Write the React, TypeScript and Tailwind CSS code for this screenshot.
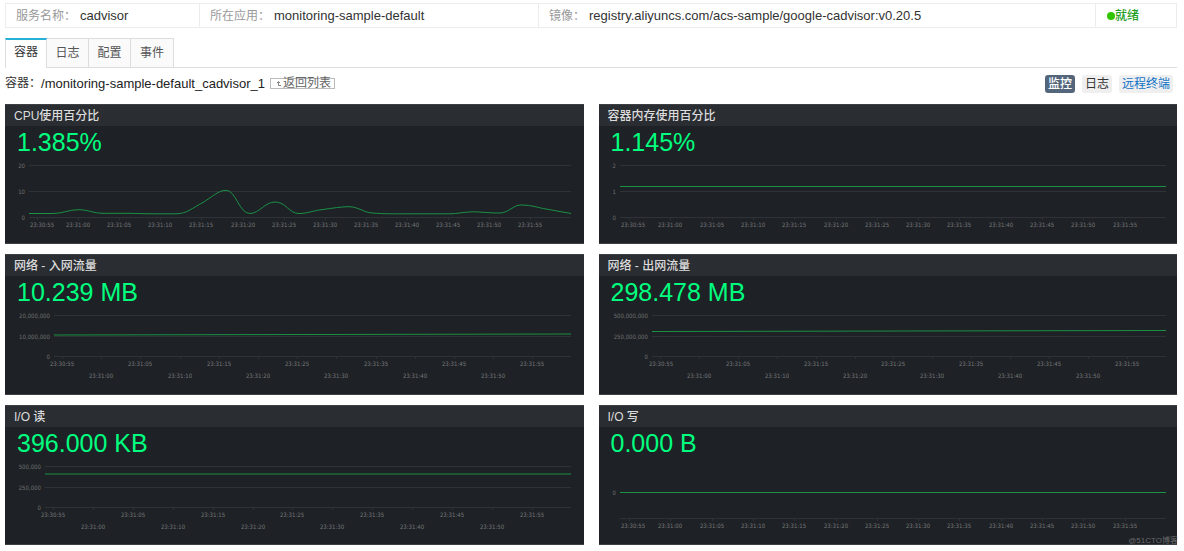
import React from "react";

type ChartProps = {
  height: number;
  left: number;
  right: number;
  grid: { y: number; label?: string }[];
  axisY: number;
  firstTick: number;
  tickGap: number;
  firstLabel: number;
  stagger?: boolean;
  line: string;
};

type PanelProps = {
  title: string;
  value: string;
  chart: ChartProps;
};

const times = [
  "23:30:55",
  "23:31:00",
  "23:31:05",
  "23:31:10",
  "23:31:15",
  "23:31:20",
  "23:31:25",
  "23:31:30",
  "23:31:35",
  "23:31:40",
  "23:31:45",
  "23:31:50",
  "23:31:55",
];

const cpuLine =
  "M24 55.5H48C58 55.5 64 51.7 73 51.7C84 51.7 88 55.3 98 55.3H122C130 55.3 137 55.8 147 55.8H171C182 55.8 188 49.5 197 45C206 40 213 32.3 221 32.3C231 32.3 234 55.5 245 55.5C254 55.5 260 44 270 44C281 44 284 55.5 294 55.5C303 55.5 308 52.5 318 51.5C327 50.3 336 48.7 344 48.7C353 48.7 359 54.5 367 55C380 56 390 55.8 400 55.8H445C452 55.8 460 53.8 468 53.8C476 53.8 485 55.2 495 55C504 54.8 508 47 516 47C527 47 534 50 541 51L566 55.5";

const panels: PanelProps[] = [
  {
    title: "CPU使用百分比",
    value: "1.385%",
    chart: {
      height: 85,
      left: 24,
      right: 566,
      grid: [
        { y: 7, label: "20" },
        { y: 33, label: "10" },
        { y: 59, label: "0" },
      ],
      axisY: 59,
      firstTick: 32,
      tickGap: 41.1,
      firstLabel: 37,
      line: cpuLine,
    },
  },
  {
    title: "容器内存使用百分比",
    value: "1.145%",
    chart: {
      height: 85,
      left: 21,
      right: 567,
      grid: [
        { y: 7, label: "2" },
        { y: 33, label: "1" },
        { y: 59, label: "0" },
      ],
      axisY: 59,
      firstTick: 30,
      tickGap: 41.3,
      firstLabel: 34,
      line: "M21 28.5H567",
    },
  },
  {
    title: "网络 - 入网流量",
    value: "10.239 MB",
    chart: {
      height: 86,
      left: 49,
      right: 566,
      grid: [
        { y: 7, label: "20,000,000" },
        { y: 28, label: "10,000,000" },
        { y: 48, label: "0" },
      ],
      axisY: 48,
      firstTick: 57,
      tickGap: 39.2,
      firstLabel: 57,
      stagger: true,
      line: "M49 27L566 26",
    },
  },
  {
    title: "网络 - 出网流量",
    value: "298.478 MB",
    chart: {
      height: 86,
      left: 53,
      right: 567,
      grid: [
        { y: 7, label: "500,000,000" },
        { y: 28, label: "250,000,000" },
        { y: 48, label: "0" },
      ],
      axisY: 48,
      firstTick: 61,
      tickGap: 38.9,
      firstLabel: 62,
      stagger: true,
      line: "M53 23.5L567 22.5",
    },
  },
  {
    title: "I/O 读",
    value: "396.000 KB",
    chart: {
      height: 85,
      left: 40,
      right: 566,
      grid: [
        { y: 7, label: "500,000" },
        { y: 28, label: "250,000" },
        { y: 48, label: "0" },
      ],
      axisY: 48,
      firstTick: 48,
      tickGap: 39.9,
      firstLabel: 48,
      stagger: true,
      line: "M40 15H566",
    },
  },
  {
    title: "I/O 写",
    value: "0.000 B",
    chart: {
      height: 85,
      left: 21,
      right: 567,
      grid: [{ y: 33, label: "0" }, { y: 59 }],
      axisY: 59,
      firstTick: 30,
      tickGap: 41.3,
      firstLabel: 34,
      line: "M21 33.5H567",
    },
  },
];

const Chart: React.FC<ChartProps> = (props) => {
  const { height, left, right, grid, axisY, firstTick, tickGap, firstLabel, stagger, line } = props;
  const labelY = axisY + 10;

  return (
    <svg
      className="block w-full"
      height={height}
      viewBox={`0 0 578 ${height}`}
      preserveAspectRatio="xMinYMin meet"
    >
      {grid.map(({ y, label }) => (
        <g key={y}>
          <path d={`M${left} ${y + 0.5}H${right}`} stroke="#2f3237" />
          <text x={left - 4} y={y + 3} textAnchor="end" className="fill-[#6f7173] text-[6px]">
            {label}
          </text>
        </g>
      ))}
      {times.map((time, i) => {
        const x = Math.round(firstTick + i * tickGap);
        return (
          <g key={time}>
            <path d={`M${x + 0.5} ${axisY}v3`} stroke="#2f3237" />
            <text
              x={i === 0 ? firstLabel : x}
              y={stagger && i % 2 === 1 ? labelY + 12 : labelY}
              textAnchor="middle"
              className="fill-[#77797b] text-[6px]"
            >
              {time}
            </text>
          </g>
        );
      })}
      <path d={line} fill="none" stroke="#1a9145" />
    </svg>
  );
};

const Panel: React.FC<PanelProps> = ({ title, value, chart }) => {
  return (
    <section className="min-w-0 border-y border-[#3d3f43] bg-[#1e2125]">
      <h2 className="flex h-[21px] items-center bg-[#2a2d32] px-[9px] text-xs font-medium text-[#dcdcdc]">
        {title}
      </h2>
      <div className="flex h-8 items-center px-3 pt-[2px] text-[25px] text-[#00ff7f]">{value}</div>
      <div className="font-['DejaVu_Sans_Condensed','Open_Sans',sans-serif]">
        <Chart {...chart} />
      </div>
    </section>
  );
};

const info = [
  { label: "服务名称：", value: "cadvisor" },
  { label: "所在应用：", value: "monitoring-sample-default" },
  { label: "镜像：", value: "registry.aliyuncs.com/acs-sample/google-cadvisor:v0.20.5" },
];

const tabs = ["容器", "日志", "配置", "事件"];

const App: React.FC = () => {
  return (
    <div className="relative bg-white pt-[3px] pr-[7px] pb-1 pl-[5px] font-['Liberation_Sans','Noto_Sans_CJK_SC',sans-serif] text-xs text-[#333]">
      <dl className="grid h-[25px] grid-cols-[194px_339px_1fr_80px] divide-x divide-[#ececec] border border-[#ececec]">
        {info.map(({ label, value }) => (
          <div key={label} className="flex items-center gap-1 pl-[10px] whitespace-nowrap">
            <dt className="text-[#999]">{label}</dt>
            <dd className="text-[13px]">{value}</dd>
          </div>
        ))}
        <div className="flex items-center pl-[11px] font-medium text-[#23a023]">
          <span className="size-2 rounded-full bg-[#2fc600]" />
          就绪
        </div>
      </dl>

      <nav className="mt-[10px] flex h-[30px] border-b border-[#ddd]">
        {tabs.map((tab, i) => (
          <button
            key={tab}
            className={
              i === 0
                ? "-mb-px w-[42px] border-x border-t-2 border-x-[#ddd] border-t-[#28b1d6] bg-white pb-1"
                : "w-[42px] border-t border-r border-[#ddd] bg-[#fafafa] text-[#555] last:w-[43px]"
            }
          >
            {tab}
          </button>
        ))}
      </nav>

      <div className="flex h-9 items-center justify-between pb-[5px]">
        <div className="flex items-center whitespace-nowrap">
          <span>容器：</span>
          <span className="text-[13px] text-[#222]">/monitoring-sample-default_cadvisor_1</span>
          <a
            href="#"
            className="ml-[5px] flex h-[11px] items-center border border-[#bbb] px-[3px] leading-none text-[#666]"
          >
            <svg className="mx-[2px]" width="5" height="5" viewBox="0 0 5 5" fill="none" stroke="#666">
              <path d="M2.5 4.5V1M1 2L2.5 .5L4 2M2.5 4.5H5" strokeWidth=".8" />
            </svg>
            返回列表
          </a>
        </div>
        <div className="flex gap-[7px] pr-1">
          <button className="h-[18px] rounded-[3px] bg-[#53667c] px-[3px] font-medium text-white">监控</button>
          <button className="h-[18px] rounded-[3px] bg-[#efefef] px-[3px]">日志</button>
          <button className="h-[18px] rounded-[3px] bg-[#efefef] px-[3px] text-[#0f73c6]">远程终端</button>
        </div>
      </div>

      <main className="grid grid-cols-2 gap-x-[15px] gap-y-[10px]">
        {panels.map((panel) => (
          <Panel key={panel.title} {...panel} />
        ))}
      </main>

      <span className="absolute right-[6px] bottom-1 text-[8px] leading-none text-[#8a8a8a]/70">@51CTO博客</span>
    </div>
  );
};

export default App;
